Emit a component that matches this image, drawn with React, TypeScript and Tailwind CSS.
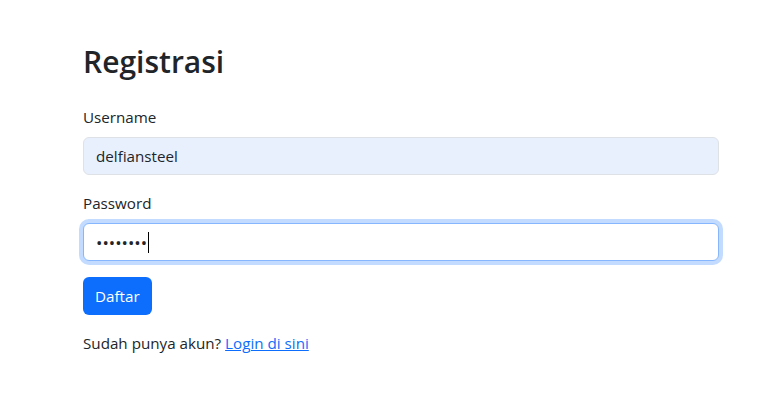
export default function App() {
  return (
    <div className="min-h-screen bg-white text-[#212529] font-['Open_Sans',sans-serif] text-[15.2px]">
      <div className="pl-[83px] pt-[43px] w-[719px]">
        <h2 className="text-[30px] font-semibold leading-[38px] mb-6">Registrasi</h2>

        <div className="mb-4">
          <label className="block mb-2 leading-6">Username</label>
          <div className="h-[38px] flex items-center px-3 border border-[#dee2e6] rounded-md bg-[#e8f0fe]">
            delfiansteel
          </div>
        </div>

        <div className="mb-4">
          <label className="block mb-2 leading-6">Password</label>
          <div className="h-[38px] flex items-center px-3 border border-[#86b7fe] rounded-md bg-white shadow-[0_0_0_4px_rgba(13,110,253,0.25)]">
            <span className="text-[17px] tracking-[0px] leading-none">••••••••</span>
            <span className="ml-[1px] w-px h-[21px] bg-black" />
          </div>
        </div>

        <button className="h-[38px] px-3 rounded-md bg-[#0d6efd] text-white leading-6">
          Daftar
        </button>

        <p className="mt-4 leading-6">
          Sudah punya akun?{" "}
          <a href="#" className="text-[#0d6efd] underline">
            Login di sini
          </a>
        </p>
      </div>
    </div>
  );
}
